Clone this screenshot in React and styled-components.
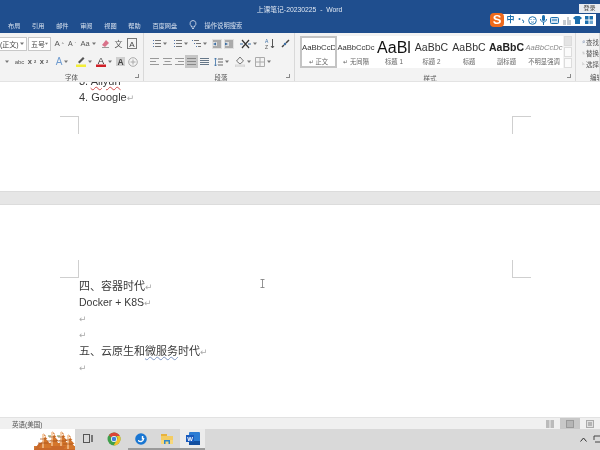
import React from "react";
import styled, { createGlobalStyle } from "styled-components";

const CJK = `"Liberation Sans", "Noto Sans CJK SC", sans-serif`;

const Global = createGlobalStyle`
  html, body { margin: 0; padding: 0; background: #fff; }
  body { font-family: ${CJK}; }
`;

const Screen = styled.div`
  position: relative;
  width: 600px;
  height: 450px;
  overflow: hidden;
  display: flex;
  flex-direction: column;
  filter: blur(0.45px);
`;

/* ---------- title bar ---------- */
const Chrome = styled.header`
  background: #1f4e8e;
  height: 33px;
  flex: none;
  display: flex;
  flex-direction: column;
`;
const TitleRow = styled.div`
  height: 17px;
  display: flex;
  align-items: center;
  justify-content: center;
  color: #dfe7f2;
  font-size: 6.8px;
  padding-right: 1px;
  white-space: pre;
`;
const TabRow = styled.nav`
  height: 16px;
  display: flex;
  align-items: center;
  gap: 11.7px;
  padding: 0 0 0 8px;
`;
const Tab = styled.span`
  font-size: 6.2px;
  color: #d6e0ee;
  white-space: nowrap;
`;
const Hint = styled.span`
  font-size: 6.3px;
  color: #d6e0ee;
  margin-left: -4px;
`;
const Login = styled.div`
  position: absolute;
  left: 579px;
  top: 4px;
  width: 21px;
  height: 9px;
  background: #e9ecf1;
  color: #444;
  font-size: 6px;
  line-height: 9px;
  text-align: center;
`;
const Sogou = styled.div`
  position: absolute;
  left: 496px;
  top: 14px;
  width: 100px;
  height: 12px;
  background: #fff;
  display: flex;
  align-items: center;
  padding-left: 10px;
  box-sizing: border-box;
`;
const SogouLogo = styled.div`
  position: absolute;
  left: -6px;
  top: -1px;
  width: 14px;
  height: 14px;
  border-radius: 4px;
  background: #ef6a1c;
  color: #fff;
  font: bold 13px/14px "Liberation Sans", sans-serif;
  text-align: center;
`;
const SogouSlot = styled.span`
  width: ${(p) => p.$w}px;
  flex: none;
  display: flex;
  justify-content: center;
  align-items: center;
  color: #1b6fae;
  font-size: 8px;
  line-height: 12px;
  font-weight: bold;
`;

/* ---------- ribbon ---------- */
const Ribbon = styled.section`
  height: 48px;
  flex: none;
  display: flex;
  background: #f3f3f3;
  border-bottom: 1px solid #e3e3e3;
`;
const Group = styled.div`
  position: relative;
  width: ${(p) => p.$w}px;
  flex: none;
  box-sizing: border-box;
  padding: 3px 0 0 ${(p) => p.$pl || 0}px;
  border-right: 1px solid #d9d9d9;
  display: flex;
  flex-direction: column;
  overflow: hidden;
`;
const Row = styled.div`
  display: flex;
  align-items: center;
  height: 17px;
  flex: none;
  position: relative;
  top: ${(p) => p.$up || 0}px;
`;
const GroupLabel = styled.div`
  margin-top: 3px;
  padding-left: ${(p) => p.$pl || 0}px;
  padding-right: ${(p) => p.$pr || 0}px;
  font-size: 6.5px;
  line-height: 9px;
  color: #555;
  text-align: center;
  white-space: nowrap;
`;
const Launcher = styled.span`
  position: absolute;
  right: 4px;
  bottom: 3px;
  width: 3px;
  height: 3px;
  border-right: 1px solid #888;
  border-bottom: 1px solid #888;
`;
const Tool = styled.span`
  width: ${(p) => p.$w}px;
  height: ${(p) => (p.$on ? 13 : 14)}px;
  flex: none;
  display: flex;
  align-items: center;
  justify-content: center;
  gap: 2px;
  color: ${(p) => p.$c || "#555"};
  font-size: ${(p) => p.$fs || 8}px;
  background: ${(p) => (p.$on ? "#c6c6c6" : "transparent")};
  font-weight: ${(p) => (p.$b ? "bold" : "normal")};
`;
const Combo = styled.span`
  width: ${(p) => p.$w}px;
  height: 14px;
  box-sizing: border-box;
  flex: none;
  margin-right: 1px;
  background: #fff;
  border: 1px solid #c8c8c8;
  border-left-width: ${(p) => (p.$open ? 0 : 1)}px;
  display: flex;
  align-items: center;
  justify-content: space-between;
  padding-right: 2px;
  font-size: 7px;
  color: #444;
  white-space: nowrap;
`;
const Gallery = styled.div`
  display: flex;
  height: 32px;
  background: #fff;
`;
const StyleCell = styled.div`
  width: ${(p) => p.$w}px;
  flex: none;
  box-sizing: border-box;
  border: ${(p) => (p.$on ? "2px solid #c4c4c4" : "none")};
  padding-top: ${(p) => (p.$on ? 0 : 2)}px;
  overflow: hidden;
  display: flex;
  flex-direction: column;
  align-items: center;
  justify-content: flex-start;
`;
const Sample = styled.div`
  height: 19px;
  line-height: 19px;
  width: 100%;
  text-align: center;
  overflow: hidden;
  white-space: nowrap;
  font-size: ${(p) => p.$fs}px;
  color: ${(p) => p.$c || "#333"};
  font-weight: ${(p) => (p.$b ? "bold" : "normal")};
  font-style: ${(p) => (p.$i ? "italic" : "normal")};
`;
const StyleName = styled.div`
  font-size: 6.3px;
  line-height: 9px;
  color: #666;
  white-space: nowrap;
`;
const GalleryTop = styled.div`
  display: flex;
  padding-left: 5px;
  margin-bottom: 3px;
`;
const Scroller = styled.div`
  width: 8px;
  height: 32px;
  flex: none;
  margin-left: 1px;
  display: flex;
  flex-direction: column;
  gap: 1px;
`;
const ScrollBtn = styled.span`
  flex: 1;
  background: ${(p) => (p.$dim ? "#e4e4e4" : "#fbfbfb")};
  border: 1px solid #dcdcdc;
  box-sizing: border-box;
`;
const EditList = styled.div`
  display: flex;
  flex-direction: column;
  padding-left: 6px;
  height: 34px;
  flex: none;
`;
const EditItem = styled.div`
  height: 12px;
  display: flex;
  align-items: center;
  gap: 1px;
  font-size: 6.5px;
  color: #555;
  white-space: nowrap;
`;

/* ---------- document ---------- */
const Doc = styled.main`
  flex: 1;
  min-height: 0;
  display: flex;
  flex-direction: column;
  background: #fff;
`;
const TopPage = styled.div`
  position: relative;
  height: 109px;
  flex: none;
  overflow: hidden;
  padding-left: 79px;
`;
const Gutter = styled.div`
  height: 12px;
  flex: none;
  background: #e6e6e6;
  border-top: 1px solid #dcdcdc;
  border-bottom: 1px solid #dcdcdc;
`;
const BottomPage = styled.div`
  position: relative;
  flex: 1;
  padding: 72.5px 0 0 79px;
`;
const Line = styled.p`
  margin: ${(p) => p.$mt || 0}px 0 0;
  height: 16.3px;
  line-height: 16.3px;
  font-size: ${(p) => p.$fs || 11}px;
  color: #3a3a3a;
  white-space: nowrap;
`;
const Mark = styled.span`
  color: #a9a9a9;
  font-size: 9px;
  font-family: "DejaVu Sans", sans-serif;
`;
const Squiggle = styled.span`
  text-decoration: underline wavy ${(p) => p.$c};
  text-decoration-thickness: 1px;
`;
const CropMark = styled.i`
  position: absolute;
  width: 19px;
  height: 18px;
  box-sizing: border-box;
  left: ${(p) => p.$x}px;
  top: ${(p) => p.$y}px;
  border-style: solid;
  border-color: #cfcfcf;
  border-width: ${(p) => p.$b};
`;
const Cursor = styled.svg`
  position: absolute;
  left: 260px;
  top: 74px;
`;

/* ---------- status bar + taskbar ---------- */
const Status = styled.footer`
  height: 12px;
  flex: none;
  box-sizing: border-box;
  background: #f0f0f0;
  border-top: 1px solid #e2e2e2;
  display: flex;
  align-items: center;
  padding-left: 12px;
  font-size: 6.5px;
  color: #555;
`;
const ViewBtns = styled.div`
  margin-left: auto;
  display: flex;
  align-items: center;
  height: 100%;
`;
const ViewBtn = styled.span`
  width: 20px;
  height: 100%;
  display: flex;
  align-items: center;
  justify-content: center;
  background: ${(p) => (p.$on ? "#c8c8c8" : "transparent")};
`;
const Taskbar = styled.footer`
  height: 21px;
  flex: none;
  background: #d9d9d9;
  display: flex;
  align-items: stretch;
`;
const Wallpaper = styled.div`
  width: 75px;
  flex: none;
  background: #fff;
  display: flex;
  align-items: flex-end;
  padding-left: 34px;
  box-sizing: border-box;
`;
const TaskBtn = styled.span`
  width: ${(p) => p.$w}px;
  flex: none;
  display: flex;
  align-items: center;
  justify-content: center;
  box-sizing: border-box;
  background: ${(p) => (p.$active ? "#ececec" : "transparent")};
  border-bottom: 2px solid ${(p) => p.$bar || "transparent"};
`;
const Tray = styled.div`
  margin-left: auto;
  display: flex;
  align-items: center;
  gap: 6px;
  margin-right: -3px;
`;

/* ---------- drawings ---------- */
const Caret = () => (
  <svg width="4" height="3" viewBox="0 0 4 3"><path d="M0 0.5h4L2 3z" fill="#777" /></svg>
);
const Lines = ({ rows, w = 9, color = "#777", lead }) => (
  <svg width={w} height="9" viewBox={`0 0 ${w} 9`}>
    {rows.map(([x, l], i) => (
      <rect key={i} x={x} y={1 + i * (rows.length > 3 ? 2 : 3)} width={l} height="1" fill={color} />
    ))}
    {lead &&
      rows.map(([x], i) => (
        <rect key={"d" + i} x={x - 2} y={1 + i * 3} width="1" height="1" fill="#5577aa" />
      ))}
  </svg>
);
const Indent = ({ flip }) => (
  <svg width="10" height="10" viewBox="0 0 10 10">
    <rect width="10" height="10" fill="#dfdfdf" />
    <path d="M1 2h8M5 4h4M5 6h4M1 8h8" stroke="#777" />
    <path d={flip ? "M1 3.5L4 5 1 6.5z" : "M4 3.5L1 5l3 1.5z"} fill="#3a6ea5" />
  </svg>
);
const Tower = ({ x, top }) => (
  <g transform={`translate(${x} ${top})`}>
    <path d="M0 0l1.500 3 3 3-1.500 0 3.500 4-2 0 4.500 5H-4.500l4.500-5-2 0 3.500-4-1.500 0 3-3z" fill="#d4762c" transform="translate(0 0)" />
    <path d="M0 1v14" stroke="#f4c08f" strokeWidth="1.500" />
    <path d="M-3 6h6M-5 10h10" stroke="#a24e17" strokeWidth="0.700" />
  </g>
);
const Towers = () => (
  <svg width="41" height="19" viewBox="0 0 41 19">
    <rect x="0" y="15" width="41" height="4" fill="#d27a36" />
    <path d="M0 19l5-7h31l5 7z" fill="#c9692a" />
    <Tower x={9} top={2} />
    <Tower x={18} top={0} />
    <Tower x={27} top={0} />
    <Tower x={34} top={3} />
    <path d="M14 5h3M23 5h3" stroke="#6f8b4a" strokeWidth="1" />
  </svg>
);
const ChromeIcon = () => (
  <svg width="14" height="14" viewBox="0 0 14 14">
    <circle cx="7" cy="7" r="6.500" fill="#3f9f4a" />
    <path d="M7 .5A6.500 6.500 0 0 1 12.800 4H7a3 3 0 0 0-2.700 1.600L1.900 3A6.500 6.500 0 0 1 7 .5z" fill="#dc4437" />
    <path d="M12.800 4A6.500 6.500 0 0 1 6.600 13.500L9.500 8.500A3 3 0 0 0 9.500 4z" fill="#f2c029" />
    <circle cx="7" cy="7" r="3" fill="#fff" />
    <circle cx="7" cy="7" r="2.300" fill="#3f7fdc" />
  </svg>
);
const EdgeIcon = () => (
  <svg width="12" height="12" viewBox="0 0 12 12">
    <circle cx="6" cy="6" r="5.800" fill="#1976d2" />
    <path d="M3 7.500c2.500 1.500 5 .8 5.800-2.500-.2 3.800-3 4.800-5.800 2.500z" fill="#fff" stroke="#fff" />
    <rect x="6.800" y="3" width="1.500" height="3.500" fill="#fff" />
  </svg>
);
const FolderIcon = () => (
  <svg width="12" height="12" viewBox="0 0 12 12">
    <rect x="0" y="1" width="6" height="3" fill="#e8b23c" />
    <rect x="0" y="3" width="12" height="8" fill="#f3cc62" />
    <rect x="0" y="7" width="12" height="4" fill="#f6d77b" />
    <rect x="3" y="7" width="6" height="4" fill="#2e86c9" />
    <rect x="4.500" y="8.500" width="3" height="2.500" fill="#f6d77b" />
  </svg>
);
const WordIcon = () => (
  <svg width="14" height="13" viewBox="0 0 14 13">
    <rect x="3" y="0" width="11" height="13" rx="1" fill="#2b7cd3" />
    <rect x="3" y="9" width="11" height="4" fill="#124f9f" />
    <rect x="0" y="3" width="8" height="7" fill="#185abd" />
    <text x="4" y="8.700" fontSize="6" fontWeight="bold" fill="#fff" textAnchor="middle" fontFamily="Liberation Sans">W</text>
  </svg>
);

const styles = [
  { w: 37, fs: 7.8, s: "AaBbCcDc", n: "↵ 正文", on: true },
  { w: 38, fs: 7.6, s: "AaBbCcDc", n: "↵ 无间隔" },
  { w: 38, fs: 16, s: "AaBl", n: "标题 1", c: "#111" },
  { w: 37, fs: 10.5, s: "AaBbC", n: "标题 2" },
  { w: 38, fs: 10.5, s: "AaBbC", n: "标题" },
  { w: 37, fs: 10.5, s: "AaBbC", n: "副标题", b: true, c: "#222" },
  { w: 38, fs: 7.6, s: "AaBbCcDc", n: "不明显强调", i: true, c: "#888" },
];
const tabs = ["布局", "引用", "邮件", "审阅", "视图", "帮助", "百度网盘"];
const Ret = () => <Mark>↵</Mark>;

export default function App() {
  return (
    <>
      <Global />
      <Screen>
        <Chrome>
          <TitleRow>上课笔记-20230225  -  Word</TitleRow>
          <TabRow>
            {tabs.map((t) => (
              <Tab key={t}>{t}</Tab>
            ))}
            <svg width="8" height="10" viewBox="0 0 8 10">
              <path d="M4 .5a3 3 0 0 0-1.600 5.500V7h3.200V6A3 3 0 0 0 4 .5zM3 8.500h2" fill="none" stroke="#dfe7f2" strokeWidth="0.800" />
            </svg>
            <Hint>操作说明搜索</Hint>
          </TabRow>
        </Chrome>
        <Login>登录</Login>
        <Sogou>
          <SogouLogo>S</SogouLogo>
          <SogouSlot $w={9}>中</SogouSlot>
          <SogouSlot $w={12}>
            <svg width="7" height="7" viewBox="0 0 7 7"><circle cx="1.500" cy="2" r="1" fill="#1b6fae" /><path d="M4 3c2 0 2 2 1 3" stroke="#1b6fae" fill="none" /></svg>
          </SogouSlot>
          <SogouSlot $w={11}>
            <svg width="9" height="9" viewBox="0 0 9 9"><circle cx="4.500" cy="4.500" r="3.800" fill="none" stroke="#1b6fae" /><path d="M3 5.500c1 1 2 1 3 0M3 3v1M6 3v1" stroke="#1b6fae" fill="none" strokeWidth="0.800" /></svg>
          </SogouSlot>
          <SogouSlot $w={11}>
            <svg width="7" height="10" viewBox="0 0 7 10"><rect x="2" y="0" width="3" height="6" rx="1.500" fill="#1b6fae" /><path d="M.5 4c0 4 6 4 6 0M3.500 7v3" stroke="#1b6fae" fill="none" /></svg>
          </SogouSlot>
          <SogouSlot $w={11}>
            <svg width="9" height="7" viewBox="0 0 9 7"><rect x=".5" y=".5" width="8" height="6" rx="1" fill="#d5e5f2" stroke="#1b6fae" /><path d="M2 3h5" stroke="#1b6fae" /></svg>
          </SogouSlot>
          <SogouSlot $w={12}>
            <svg width="9" height="9" viewBox="0 0 9 9"><path d="M1 4h3v5H1zM5 1h2v3h2v5H5z" fill="#c5cbd0" /></svg>
          </SogouSlot>
          <SogouSlot $w={11}>
            <svg width="9" height="8" viewBox="0 0 9 8"><path d="M2.500 0h4L9 2 7.500 3.500 7 3v5H2V3l-.5.500L0 2z" fill="#1b6fae" /></svg>
          </SogouSlot>
          <SogouSlot $w={11}>
            <svg width="8" height="8" viewBox="0 0 8 8"><path d="M0 0h3.500v3.500H0zM4.500 0H8v3.500H4.500zM0 4.500h3.500V8H0z" fill="#1b6fae" /><path d="M4.500 4.500H8V8H4.500z" fill="#6fa6cf" /></svg>
          </SogouSlot>
        </Sogou>

        <Ribbon>
          <Group $w={144}>
            <Row $up={-1}>
              <Combo $w={27} $open>(正文)<Caret /></Combo>
              <Combo $w={23}>&nbsp;五号<Caret /></Combo>
              <Tool $w={14} $fs={8}>A<sup style={{ fontSize: 4 }}>^</sup></Tool>
              <Tool $w={12} $fs={7}>A<sup style={{ fontSize: 4 }}>ˇ</sup></Tool>
              <Tool $w={20} $fs={7.5}>Aa<Caret /></Tool>
              <Tool $w={14}>
                <svg width="9" height="9" viewBox="0 0 9 9"><path d="M1 6l4-5 3 3-4 4z" fill="#d9728a" /><path d="M1 8.500h7" stroke="#999" /></svg>
              </Tool>
              <Tool $w={13} $fs={8}>文</Tool>
              <Tool $w={14}>
                <svg width="10" height="11" viewBox="0 0 10 11"><rect x=".5" y=".5" width="9" height="10" fill="none" stroke="#777" /><text x="5" y="8.500" fontSize="8" textAnchor="middle" fill="#444" fontFamily="Liberation Sans">A</text></svg>
              </Tool>
            </Row>
            <Row>
              <Tool $w={13}><Caret /></Tool>
              <Tool $w={13} $fs={6}>abc</Tool>
              <Tool $w={12} $fs={7.5} $b>x<sub style={{ fontSize: 4 }}>2</sub></Tool>
              <Tool $w={12} $fs={7.5} $b>x<sup style={{ fontSize: 4 }}>2</sup></Tool>
              <Tool $w={24} $fs={10} $c="#6e9bd0">A<Caret /></Tool>
              <Tool $w={20}>
                <svg width="10" height="11" viewBox="0 0 10 11"><path d="M2 6l5-5 1.500 1.500-5 5z" fill="#555" /><rect x="0" y="8.500" width="10" height="2.500" fill="#f3ee3a" /></svg>
                <Caret />
              </Tool>
              <Tool $w={20}>
                <svg width="10" height="11" viewBox="0 0 10 11"><text x="5" y="8" fontSize="9.500" textAnchor="middle" fill="#333" fontFamily="Liberation Sans">A</text><rect x="0" y="8.500" width="10" height="2.500" fill="#d02027" /></svg>
                <Caret />
              </Tool>
              <Tool $w={12}>
                <svg width="9" height="9" viewBox="0 0 9 9"><rect width="9" height="9" fill="#cfcfcf" /><text x="4.500" y="7.800" fontSize="8.500" fontWeight="bold" textAnchor="middle" fill="#444" fontFamily="Liberation Sans">A</text></svg>
              </Tool>
              <Tool $w={13}>
                <svg width="10" height="10" viewBox="0 0 10 10"><circle cx="5" cy="5" r="4.300" fill="none" stroke="#aaa" /><path d="M5 2.500v5M2.500 5h5" stroke="#aaa" /></svg>
              </Tool>
            </Row>
            <GroupLabel>字体</GroupLabel>
            <Launcher />
          </Group>

          <Group $w={151} $pl={4}>
            <Row $up={-1}>
              <Tool $w={22}><Lines lead rows={[[3, 6], [3, 6], [3, 6]]} /><Caret /></Tool>
              <Tool $w={20}><Lines lead rows={[[3, 6], [3, 6], [3, 6]]} /><Caret /></Tool>
              <Tool $w={18}><Lines lead rows={[[2, 5], [4, 5], [6, 3]]} /><Caret /></Tool>
              <Tool $w={3} />
              <Tool $w={12}><Indent /></Tool>
              <Tool $w={12}><Indent flip /></Tool>
              <Tool $w={3} />
              <Tool $w={21} $c="#333">
                <svg width="11" height="10" viewBox="0 0 11 10"><path d="M2 1l7 8M9 1L2 9" stroke="#333" strokeWidth="1.200" /><path d="M0 5h3M8 5h3" stroke="#3a6ea5" /></svg>
                <Caret />
              </Tool>
              <Tool $w={4} />
              <Tool $w={13}>
                <svg width="10" height="11" viewBox="0 0 10 11"><text x="0" y="5" fontSize="5" fill="#3a6ea5" fontFamily="Liberation Sans">A</text><text x="0" y="10.500" fontSize="5" fill="#555" fontFamily="Liberation Sans">Z</text><path d="M7.500 1v9M6 8l1.500 2L9 8" stroke="#555" fill="none" /></svg>
              </Tool>
              <Tool $w={3} />
              <Tool $w={12}>
                <svg width="9" height="9" viewBox="0 0 9 9"><path d="M8 1L5 4M1 8l2-2" stroke="#444" strokeWidth="1.500" /><circle cx="4" cy="5" r="1.200" fill="#3a6ea5" /></svg>
              </Tool>
            </Row>
            <Row>
              <Tool $w={13}><Lines rows={[[0, 9], [0, 6], [0, 9]]} color="#999" /></Tool>
              <Tool $w={12}><Lines rows={[[0, 9], [1.500, 6], [0, 9]]} color="#999" /></Tool>
              <Tool $w={12}><Lines rows={[[0, 9], [3, 6], [0, 9]]} color="#999" /></Tool>
              <Tool $w={13} $on><Lines rows={[[0, 9], [0, 9], [0, 9]]} color="#888" /></Tool>
              <Tool $w={13}><Lines rows={[[0, 9], [0, 9], [0, 9], [0, 9]]} color="#667788" /></Tool>
              <Tool $w={2} />
              <Tool $w={17}>
                <svg width="9" height="10" viewBox="0 0 9 10"><path d="M1.500 1v8M0 2.500L1.500 1 3 2.500M0 7.500L1.500 9 3 7.500" stroke="#3a6ea5" fill="none" strokeWidth="0.800" /><path d="M4 2h5M4 5h5M4 8h5" stroke="#666" /></svg>
                <Caret />
              </Tool>
              <Tool $w={3} />
              <Tool $w={20}>
                <svg width="10" height="11" viewBox="0 0 10 11"><path d="M5 1l3.500 4L5 8 1.500 5z" fill="none" stroke="#777" /><rect x="0" y="9" width="10" height="2" fill="#e9e9e9" stroke="#bbb" strokeWidth="0.500" /></svg>
                <Caret />
              </Tool>
              <Tool $w={20}>
                <svg width="10" height="10" viewBox="0 0 10 10"><path d="M.5.500h9v9h-9zM5 .5v9M.5 5h9" fill="none" stroke="#aaa" /></svg>
                <Caret />
              </Tool>
            </Row>
            <GroupLabel>段落</GroupLabel>
            <Launcher />
          </Group>

          <Group $w={281}>
            <GalleryTop>
              <Gallery>
                {styles.map((s, i) => (
                  <StyleCell key={i} $w={s.w} $on={s.on}>
                    <Sample $fs={s.fs} $c={s.c} $b={s.b} $i={s.i}>{s.s}</Sample>
                    <StyleName>{s.n}</StyleName>
                  </StyleCell>
                ))}
              </Gallery>
              <Scroller>
                <ScrollBtn $dim />
                <ScrollBtn />
                <ScrollBtn />
              </Scroller>
            </GalleryTop>
            <GroupLabel $pr={10}>样式</GroupLabel>
            <Launcher />
          </Group>

          <Group $w={24}>
            <EditList>
              <EditItem>
                <svg width="8" height="8" viewBox="0 0 8 8"><circle cx="5" cy="3" r="2.500" fill="none" stroke="#4a6a96" /><path d="M3 5L.5 7.500" stroke="#4a6a96" /></svg>
                查找
              </EditItem>
              <EditItem>
                <svg width="8" height="8" viewBox="0 0 8 8"><path d="M1 2h5M2 6h5" stroke="#777" /></svg>
                替换
              </EditItem>
              <EditItem>
                <svg width="8" height="8" viewBox="0 0 8 8"><path d="M1 0v7l2-2 3 0z" fill="#fff" stroke="#aaa" /></svg>
                选择
              </EditItem>
            </EditList>
            <GroupLabel $pl={14}>编辑</GroupLabel>
          </Group>
        </Ribbon>

        <Doc>
          <TopPage>
            <Line $mt={-9}>3. <Squiggle $c="#d04a4a">Aliyun</Squiggle></Line>
            <Line>4. Google<Ret /></Line>
            <CropMark $x={60} $y={34} $b="1px 1px 0 0" />
            <CropMark $x={512} $y={34} $b="1px 0 0 1px" />
          </TopPage>
          <Gutter />
          <BottomPage>
            <CropMark $x={60} $y={55} $b="0 1px 1px 0" />
            <CropMark $x={512} $y={55} $b="0 0 1px 1px" />
            <Cursor width="5" height="9" viewBox="0 0 5 9">
              <path d="M.5.500h4M.5 8.500h4M2.500.5v8" stroke="#777" fill="none" strokeWidth="0.800" />
            </Cursor>
            <Line>四、容器时代<Ret /></Line>
            <Line $fs={10.5}>Docker + K8S<Ret /></Line>
            <Line><Ret /></Line>
            <Line><Ret /></Line>
            <Line>五、云原生和<Squiggle $c="#7f97c4">微服务</Squiggle>时代<Ret /></Line>
            <Line><Ret /></Line>
          </BottomPage>
        </Doc>

        <Status>
          英语(美国)
          <ViewBtns>
            <ViewBtn>
              <svg width="8" height="8" viewBox="0 0 8 8"><rect width="8" height="8" fill="#bbb" /><path d="M4 0v8" stroke="#eee" /></svg>
            </ViewBtn>
            <ViewBtn $on>
              <svg width="8" height="8" viewBox="0 0 8 8"><rect x=".5" y=".5" width="7" height="7" fill="#b5b5b5" stroke="#999" /></svg>
            </ViewBtn>
            <ViewBtn>
              <svg width="8" height="8" viewBox="0 0 8 8"><rect x=".5" y=".5" width="7" height="7" fill="#e0e0e0" stroke="#aaa" /><path d="M2 3h4M2 5h4" stroke="#888" /></svg>
            </ViewBtn>
          </ViewBtns>
        </Status>
        <Taskbar>
          <Wallpaper><Towers /></Wallpaper>
          <TaskBtn $w={25}>
            <svg width="10" height="9" viewBox="0 0 10 9"><rect x=".5" y=".5" width="6" height="8" fill="none" stroke="#555" /><path d="M9 1v7" stroke="#555" strokeWidth="1.500" /></svg>
          </TaskBtn>
          <TaskBtn $w={28}><ChromeIcon /></TaskBtn>
          <TaskBtn $w={26} $bar="#9a9a9a"><EdgeIcon /></TaskBtn>
          <TaskBtn $w={26} $bar="#9a9a9a"><FolderIcon /></TaskBtn>
          <TaskBtn $w={25} $active $bar="#9a9a9a"><WordIcon /></TaskBtn>
          <Tray>
            <svg width="7" height="5" viewBox="0 0 7 5"><path d="M.5 4.500l3-3.500 3 3.500" fill="none" stroke="#333" /></svg>
            <svg width="10" height="9" viewBox="0 0 10 9"><path d="M1 1h9v6H2M1 1v4" fill="none" stroke="#444" /></svg>
          </Tray>
        </Taskbar>
      </Screen>
    </>
  );
}
